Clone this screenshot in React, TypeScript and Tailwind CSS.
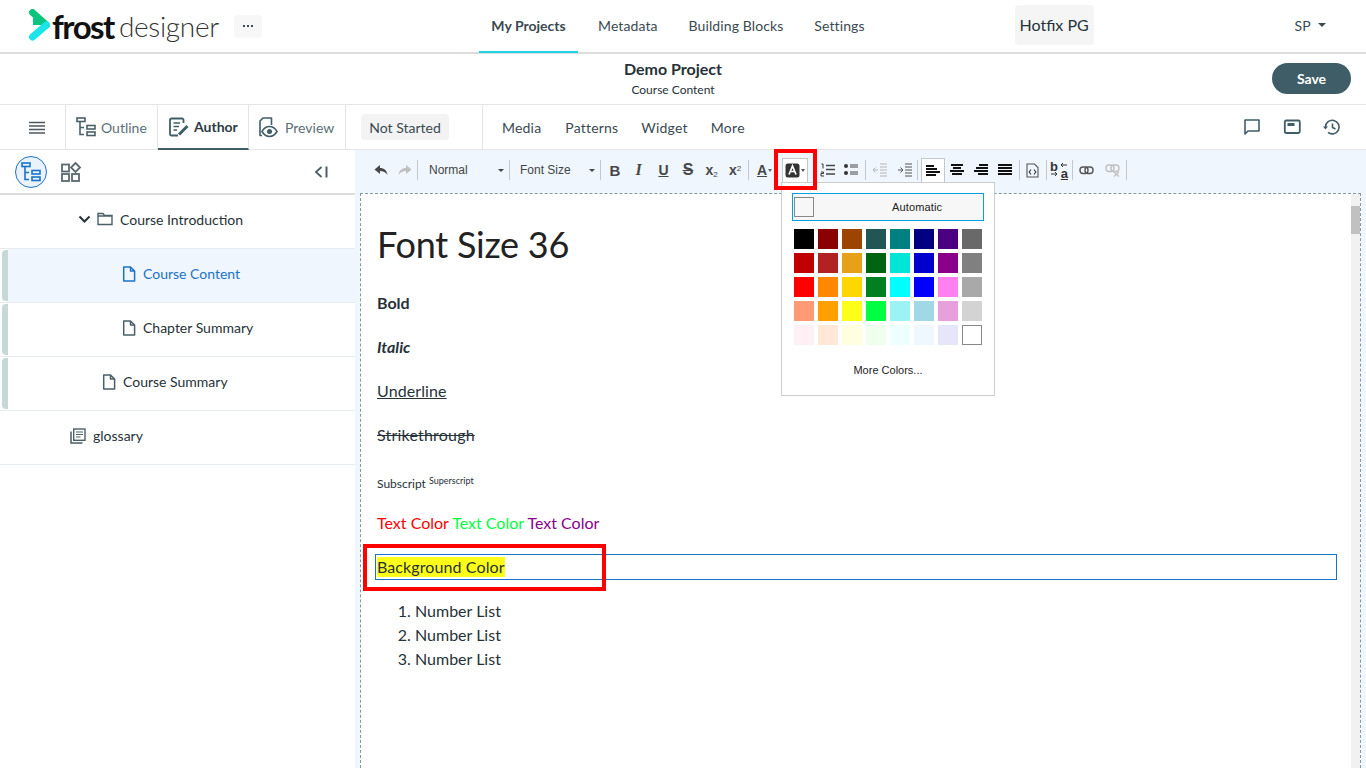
import React from "react";

const lato = { fontFamily: "Lato, sans-serif" };

const Ic = ({ w = 20, h = 20, vb, children, className = "" }: { w?: number; h?: number; vb?: string; children: React.ReactNode; className?: string }) => (
  <svg width={w} height={h} viewBox={vb || `0 0 ${w} ${h}`} fill="none" className={className}>{children}</svg>
);

const TreeIcon = ({ c = "#4a5f68", s = 1.6 }: { c?: string; s?: number }) => (
  <Ic w={20} h={20}>
    <g stroke={c} strokeWidth={s}>
      <rect x="1" y="1" width="8" height="3.5" />
      <path d="M4 4.5V17.5H8M4 10.5H8" />
      <rect x="11" y="8.5" width="8" height="3.5" />
      <rect x="11" y="15" width="8" height="3.5" />
    </g>
  </Ic>
);

const DocIcon = ({ c = "#4a5f68" }: { c?: string }) => (
  <Ic w={14} h={16}>
    <path d="M1.7 1H8.5L12.6 5V14.9H1.7Z M8.5 1V5H12.6" stroke={c} strokeWidth="1.5" strokeLinejoin="round" />
  </Ic>
);

const Sep = ({ cls = "" }: { cls?: string }) => <span className={`w-px h-[20px] bg-[#c4c8cc] shrink-0 ${cls}`} />;

const Tb = ({ w = 24, children, cls = "" }: { w?: number; children: React.ReactNode; cls?: string }) => (
  <span style={{ width: w }} className={`h-[24px] flex items-center justify-center shrink-0 ${cls}`}>{children}</span>
);

const Lines = ({ rows, dim = false }: { rows: [number, number][]; dim?: boolean }) => (
  <Ic w={16} h={14}>
    {rows.map(([x1, x2], i) => (
      <rect key={i} x={x1} y={1 + i * 3} width={x2 - x1} height="2" fill={dim ? "#b5b5b5" : "#111"} />
    ))}
  </Ic>
);

const swatches = [
  ["#000000", "#8b0000", "#9b4500", "#215654", "#008080", "#000080", "#4b0082", "#696969"],
  ["#c00000", "#b22222", "#e6a118", "#006410", "#00e5d5", "#0000cd", "#8b008b", "#808080"],
  ["#ff0000", "#ff8800", "#ffd700", "#008020", "#00ffff", "#0000ff", "#ff80ee", "#a9a9a9"],
  ["#ff9a76", "#ffa000", "#ffff1a", "#00ff40", "#9bf3f3", "#a0d8e6", "#e8a0dc", "#d3d3d3"],
  ["#fff0f5", "#ffe8d6", "#ffffe0", "#eeffee", "#eeffff", "#f0f8ff", "#e6e6fa", "#ffffff"],
];

const Row = ({ indent, icon, label, handle, active }: { indent: number; icon: React.ReactNode; label: string; handle?: boolean; active?: boolean }) => (
  <div className="h-[54px] flex border-b border-[#e9ecef] shrink-0">
    <div className="w-[2px]" />
    <div className={`w-[6px] my-px rounded-l-[4px] ${handle ? "bg-[#c8d8d8]" : ""}`} />
    <div className={`flex-1 flex items-center pb-[4px] ${active ? "bg-[#eff6fe]" : ""}`} style={{ paddingLeft: indent }}>
      {icon}
      <span className={`text-[14px] ${active ? "text-[#1a73c9]" : "text-[#263238]"}`}>{label}</span>
    </div>
  </div>
);

export default function App() {
  return (
    <div className="relative w-[1366px] h-[768px] overflow-hidden bg-white text-[#263238]" style={lato}>
      {/* top nav */}
      <header className="h-[54px] flex items-center border-b-2 border-[#dcdcdc] bg-white">
        <div className="w-[479px] flex items-center pl-[28px] shrink-0">
          <Ic w={23} h={32} className="mb-[3px]">
            <path d="M5 3.5L19 16L5 16Z" fill="#0bc47e" />
            <path d="M4.5 3.5L18.5 16" stroke="#0bc47e" strokeWidth="7" strokeLinecap="round" />
            <path d="M4.5 28L18.5 16" stroke="#1de4e8" strokeWidth="7" strokeLinecap="round" />
          </Ic>
          <span className="ml-[1px] text-[33px] font-bold text-[#111] tracking-[-1.500px] leading-none">frost</span>
          <span className="ml-[5px] text-[28px] font-light text-[#333] leading-none tracking-[-0.300px]">designer</span>
          <span className="ml-[15px] w-[28px] h-[23px] rounded-[4px] bg-[#f7f7f7] flex items-center justify-center gap-[2px]">
            <i className="w-[2px] h-[2px] bg-[#3c4a55]" /><i className="w-[2px] h-[2px] bg-[#3c4a55]" /><i className="w-[2px] h-[2px] bg-[#3c4a55]" />
          </span>
        </div>
        <nav className="flex items-center h-full text-[14px] tracking-[0.100px]">
          <span className="w-[99px] h-full flex items-center justify-center pb-[2px] font-bold text-[#3a4a52] border-b-2 border-[#1fd4e0] -mb-[2px] tracking-normal">My Projects</span>
          <span className="ml-[20px] pb-[2px] text-[#3a4a52]">Metadata</span>
          <span className="ml-[31px] pb-[2px] text-[#3a4a52]">Building Blocks</span>
          <span className="ml-[31px] pb-[2px] text-[#3a4a52]">Settings</span>
        </nav>
        <span className="ml-[150px] mb-[2px] w-[79px] h-[40px] rounded-[4px] bg-[#f5f5f5] flex items-center justify-center text-[16px]">Hotfix PG</span>
        <span className="ml-[201px] pb-[2px] text-[14px] text-[#3a4a52]">SP</span>
        <span className="ml-[7px] mb-[2px] w-0 h-0 border-x-[4px] border-x-transparent border-t-[4px] border-t-[#3a4a52]" />
      </header>

      {/* title bar */}
      <div className="h-[51px] flex items-center border-b border-[#e5e5e5]">
        <div className="w-[1272px] pl-[346px] pb-[3px] flex flex-col items-start">
          <span className="w-[654px] text-center text-[16px] font-bold leading-[20px] text-[#263238]">Demo Project</span>
          <span className="w-[654px] text-center text-[12px] leading-[14px] mt-[4px]">Course Content</span>
        </div>
        <button className="w-[79px] h-[31px] mb-[1px] rounded-full bg-[#3f5d66] text-white text-[14px] font-bold">Save</button>
      </div>

      {/* tab bar */}
      <div className="h-[45px] flex items-stretch border-b border-[#e5e5e5] text-[14px]">
        <div className="w-[66px] flex items-center justify-center border-r border-[#e5e5e5] pl-[10px] pr-[1px] shrink-0">
          <Ic w={16} h={13}><path d="M0 1.5H16M0 5H16M0 8.5H16M0 12H16" stroke="#4a5a60" strokeWidth="1.5" /></Ic>
        </div>
        <div className="w-[92px] flex items-center pl-[10px] gap-[5px] border-r border-[#e5e5e5] text-[#5b6f78] shrink-0">
          <TreeIcon />Outline
        </div>
        <div className="w-[91px] flex items-center pl-[10px] gap-[4px] border-r border-[#e5e5e5] border-b-2 border-b-[#3f5d66] -mb-px font-bold text-[#2c3a42] shrink-0">
          <Ic w={22} h={22}>
            <path d="M10 19.5H3.5a1.5 1.5 0 0 1-1.5-1.5V4a1.5 1.5 0 0 1 1.5-1.5H14a1.5 1.5 0 0 1 1.5 1.5V7" stroke="#3f5d66" strokeWidth="1.8" />
            <path d="M5.5 7H12M5.5 10.5H11M5.5 14H9" stroke="#3f5d66" strokeWidth="1.5" />
            <path d="M11 18.5L19.5 10" stroke="#3f5d66" strokeWidth="3" />
          </Ic>
          Author
        </div>
        <div className="w-[97px] flex items-center pl-[8px] gap-[7px] border-r border-[#e5e5e5] text-[#5b6f78] shrink-0">
          <Ic w={21} h={22}>
            <path d="M5 19.5H3V5L6 2H14.5V9" stroke="#3f5d66" strokeWidth="1.6" strokeLinejoin="round" />
            <path d="M5 15.5C7 12 9.5 10.5 12.5 10.5S18 12 20 15.5C18 19 15.5 20.5 12.500 20.500S7 19 5 15.500Z" stroke="#3f5d66" strokeWidth="1.6" />
            <circle cx="12.5" cy="15.500" r="2.500" fill="#3f5d66" />
          </Ic>
          Preview
        </div>
        <div className="w-[137px] flex items-center pl-[15px] border-r border-[#e5e5e5] shrink-0">
          <span className="h-[26px] w-[88px] rounded-[4px] bg-[#f3f3f3] flex items-center justify-center text-[#3a4a52]">Not Started</span>
        </div>
        <span className="ml-[19px] self-center text-[#3a4a52] tracking-[0.200px]">Media</span>
        <span className="ml-[24px] self-center text-[#3a4a52] tracking-[0.200px]">Patterns</span>
        <span className="ml-[23px] self-center text-[#3a4a52] tracking-[0.200px]">Widget</span>
        <span className="ml-[23px] self-center text-[#3a4a52] tracking-[0.300px]">More</span>
        <div className="ml-auto flex items-center gap-[20px] pr-[24px]">
          <Ic w={20} h={20}>
            <path d="M3 3H17V14H6L3 17Z" stroke="#3f5d66" strokeWidth="1.6" strokeLinejoin="round" />
          </Ic>
          <Ic w={20} h={20}>
            <rect x="2.800" y="3.500" width="15" height="12.500" rx="1.500" stroke="#3f5d66" strokeWidth="1.800" />
            <rect x="5.500" y="6" width="7" height="3" fill="#3f5d66" />
          </Ic>
          <Ic w={20} h={20}>
            <path d="M3.500 10A6.800 6.800 0 1 1 6 15.300" stroke="#3f5d66" strokeWidth="1.600" />
            <path d="M1 9.500H6L3.500 12.500Z" fill="#3f5d66" />
            <path d="M10.500 6.500V10.500L13.500 12" stroke="#3f5d66" strokeWidth="1.600" />
          </Ic>
        </div>
      </div>

      {/* main */}
      <div className="flex h-[618px]">
        {/* left panel */}
        <aside className="w-[355px] shrink-0 flex flex-col bg-white">
          <div className="h-[45px] flex items-center border-b-2 border-[#dcdcdc] pl-[15px] shrink-0">
            <span className="w-[32px] h-[32px] rounded-full border border-[#1a73c9] bg-[#eaf2fb] flex items-center justify-center">
              <TreeIcon c="#1a73c9" />
            </span>
            <span className="ml-[13px]">
              <Ic w={22} h={20}>
                <g stroke="#5a6a70" strokeWidth="1.800">
                  <rect x="2" y="2.500" width="7" height="7" />
                  <rect x="2" y="12" width="7" height="7" />
                  <rect x="12" y="12" width="7" height="7" />
                  <path d="M15.500 1L20 5.500L15.500 10L11 5.500Z" />
                </g>
              </Ic>
            </span>
            <span className="ml-[232px]">
              <Ic w={15} h={14}>
                <path d="M7.500 2L2 7L7.500 12" stroke="#4a5f68" strokeWidth="1.800" />
                <path d="M12.500 1.500V12.500" stroke="#4a5f68" strokeWidth="2" />
              </Ic>
            </span>
          </div>
          <div className="h-[54px] flex items-center border-b border-[#e9ecef] pl-[78px] pb-[5px] shrink-0">
            <Ic w={13} h={9} className="mr-[6px]"><path d="M1.500 1.500L6.500 6.500L11.500 1.500" stroke="#263238" strokeWidth="2" /></Ic>
            <Ic w={16} h={14} className="mr-[7px]"><path d="M1 12.500V1.500H6L7.500 3.500H15V12.500Z M1 4H15" stroke="#4a5f68" strokeWidth="1.400" /></Ic>
            <span className="text-[14px]">Course Introduction</span>
          </div>
          <Row indent={114} active handle icon={<span className="mr-[7px] flex"><DocIcon c="#1a73c9" /></span>} label="Course Content" />
          <Row indent={114} handle icon={<span className="mr-[7px] flex"><DocIcon /></span>} label="Chapter Summary" />
          <Row indent={94} handle icon={<span className="mr-[7px] flex"><DocIcon /></span>} label="Course Summary" />
          <div className="h-[54px] flex items-center border-b border-[#e9ecef] pl-[70px] pb-[4px] shrink-0">
            <Ic w={16} h={16} className="mr-[7px]">
              <path d="M1 3.500V15H12.500" stroke="#4a5f68" strokeWidth="1.500" />
              <rect x="3.700" y="1" width="11.300" height="11.300" stroke="#4a5f68" strokeWidth="1.400" />
              <path d="M6 4H13M6 6.500H13M6 9H10.500" stroke="#4a5f68" strokeWidth="1.200" />
            </Ic>
            <span className="text-[14px]">glossary</span>
          </div>
        </aside>

        {/* right */}
        <main className="flex-1 flex flex-col bg-[#eff6fe]">
          {/* toolbar */}
          <div className="h-[40px] flex items-center pl-[14px] shrink-0 text-[#333]" style={{ fontFamily: '"Liberation Sans", Arial, sans-serif' }}>
            <Tb>
              <Ic w={16} h={12}><path d="M7 1L1.500 5.500L7 10V7C10 7 12.500 8 14.500 11C14 6.500 11 4 7 4Z" fill="#474747" /></Ic>
            </Tb>
            <Tb>
              <Ic w={16} h={12}><path d="M9 1L14.500 5.500L9 10V7C6 7 3.500 8 1.500 11C2 6.500 5 4 9 4Z" fill="#c0c0c0" /></Ic>
            </Tb>
            <Sep />
            <span className="w-[91px] h-[24px] flex items-center pl-[11px] pr-[5px] justify-between text-[12px] text-[#444]">
              Normal<i className="w-0 h-0 border-x-[3.500px] border-x-transparent border-t-[3.500px] border-t-[#444]" />
            </span>
            <Sep />
            <span className="w-[90px] h-[24px] flex items-center pl-[10px] pr-[5px] justify-between text-[12px] text-[#444]">
              Font Size<i className="w-0 h-0 border-x-[3.500px] border-x-transparent border-t-[3.500px] border-t-[#444]" />
            </span>
            <Sep />
            <Tb w={28}><b className="text-[15px] leading-none text-[#474747]">B</b></Tb>
            <Tb w={19}><b className="italic text-[16px] leading-none text-[#474747]" style={{ fontFamily: '"Liberation Serif", serif' }}>I</b></Tb>
            <Tb w={25} cls="ml-[3px]"><b className="underline text-[14px] leading-none text-[#474747]">U</b></Tb>
            <Tb w={24}><b className="line-through text-[16px] leading-none text-[#474747]">S</b></Tb>
            <Tb w={23}><b className="text-[14px] leading-none text-[#474747]">x<sub className="text-[8px] font-normal">2</sub></b></Tb>
            <Tb w={24}><b className="text-[14px] leading-none text-[#474747]">x<sup className="text-[8px] font-normal">2</sup></b></Tb>
            <Sep cls="ml-[1px]" />
            <Tb w={25}>
              <span className="flex items-center gap-[1px] pl-[6px]">
                <b className="underline text-[14px] leading-none text-[#474747]">A</b>
                <i className="w-0 h-0 border-x-[2.500px] border-x-transparent border-t-[3px] border-t-[#666]" />
              </span>
            </Tb>
            <span className="ml-[8px] w-[26px] h-[25px] border border-[#c4c8cc] border-b-white bg-white flex items-center justify-center gap-[1px] shrink-0 mt-[1px]">
              <Ic w={15} h={15}>
                <rect x="0.500" y="0.500" width="14" height="14" rx="2.500" fill="#333" />
                <path d="M4 11.500L7.500 3L11 11.500M5.300 8.500H9.700" stroke="#fff" strokeWidth="1.700" />
              </Ic>
              <i className="w-0 h-0 border-x-[2.500px] border-x-transparent border-t-[3px] border-t-[#555]" />
            </span>
            <Tb w={22} cls="ml-[9px]">
              <Ic w={16} h={14}>
                <path d="M6 2.500H15M6 6.500H15M6 11H15" stroke="#474747" strokeWidth="1.300" />
                <path d="M1.500 1H3V5.500M1 9H3.500V10.500H1V13H4" stroke="#333" strokeWidth="1" />
              </Ic>
            </Tb>
            <Tb w={23}>
              <Ic w={16} h={14}>
                <circle cx="3" cy="3" r="2" fill="#333" /><circle cx="3" cy="10" r="2" fill="#333" />
                <path d="M7 2H15M7 4H15M7 9H15M7 11H15" stroke="#474747" strokeWidth="1" />
              </Ic>
            </Tb>
            <Sep cls="ml-[3px]" />
            <Tb w={28}>
              <Ic w={16} h={14}>
                <path d="M1 7H6M3.500 4.500L1 7L3.500 9.500M8 1H15M8 4H15M8 7H15M8 10H15M8 13H15" stroke="#b5b5b5" strokeWidth="1" />
              </Ic>
            </Tb>
            <Tb w={22}>
              <Ic w={16} h={14}>
                <path d="M1 7H6M3.500 4.500L6 7L3.500 9.500M8 1H15M8 4H15M8 7H15M8 10H15M8 13H15" stroke="#555" strokeWidth="1" />
              </Ic>
            </Tb>
            <Sep cls="ml-[1px]" />
            <span className="ml-[3px] w-[24px] h-[25px] border border-[#c4c8cc] bg-white flex items-center justify-center shrink-0 mt-[1px]">
              <Lines rows={[[1, 9], [1, 12], [1, 15], [1, 11]]} />
            </span>
            <Tb w={24}><Lines rows={[[2, 14], [4, 12], [1, 15], [3, 13]]} /></Tb>
            <Tb w={24}><Lines rows={[[6, 15], [3, 15], [1, 15], [5, 15]]} /></Tb>
            <Tb w={24}><Lines rows={[[1, 15], [1, 15], [1, 15], [1, 15]]} /></Tb>
            <Sep cls="ml-[2px]" />
            <Tb w={24}>
              <Ic w={13} h={15}>
                <path d="M1 1H8.500L12 4.500V14H1Z" stroke="#555" strokeWidth="1.100" />
                <path d="M5 6.500L3.200 9L5 11.500M8 6.500L9.800 9L8 11.500" stroke="#333" strokeWidth="1.100" />
              </Ic>
            </Tb>
            <Sep cls="ml-[2px]" />
            <Tb w={24}>
              <span className="relative flex w-[18px] h-[20px] text-[13px] leading-none font-bold text-[#333]">
                <span className="absolute left-0 top-0">b</span>
                <span className="absolute right-0 bottom-0 underline">a</span>
                <svg width="18" height="20" viewBox="0 0 18 20" fill="none" className="absolute left-0 top-0">
                  <path d="M17 5H11M13 3L11 5L13 7M1 14H7M5 12L7 14L5 16" stroke="#333" strokeWidth="1" />
                </svg>
              </span>
            </Tb>
            <Sep cls="ml-[1px]" />
            <Tb w={26}>
              <Ic w={15} h={9}>
                <rect x="1" y="1" width="8" height="6.500" rx="3" stroke="#555" strokeWidth="1.400" />
                <rect x="6" y="1" width="8" height="6.500" rx="3" stroke="#555" strokeWidth="1.400" />
              </Ic>
            </Tb>
            <Tb w={27}>
              <Ic w={15} h={13}>
                <rect x="1" y="1" width="8" height="6.500" rx="3" stroke="#c0c0c0" strokeWidth="1.400" />
                <rect x="6" y="1" width="8" height="6.500" rx="3" stroke="#c0c0c0" strokeWidth="1.400" />
                <path d="M9 8L14 12.500M14 8L9 12.500" stroke="#c0c0c0" strokeWidth="1.400" />
              </Ic>
            </Tb>
            <Sep />
          </div>

          {/* editing surface */}
          <div className="mt-[3px] ml-[5px] w-[1001px] flex-1 flex border border-dashed border-[#7f9a9a] border-b-0 bg-white overflow-hidden">
            <div className="flex-1 pl-[14px] pr-[14px]" style={{ fontFamily: "Lato, sans-serif" }}>
              <h1 className="ml-[2px] text-[36px] leading-[44px] mt-[28px] text-[#222] tracking-[-0.250px]">Font Size 36</h1>
              <p className="ml-[2px] text-[16px] font-bold leading-[24px] mt-[25px]">Bold</p>
              <p className="ml-[2px] text-[16px] font-bold italic leading-[24px] mt-[20px]">Italic</p>
              <p className="ml-[2px] text-[16px] underline leading-[24px] mt-[20px] tracking-[0.100px]">Underline</p>
              <p className="ml-[2px] text-[16px] line-through leading-[24px] mt-[20px] tracking-[0.200px]">Strikethrough</p>
              <p className="ml-[2px] text-[12px] leading-[24px] mt-[25px]">
                Subscript <sup className="text-[9px]">Superscript</sup>
              </p>
              <p className="ml-[2px] text-[16px] leading-[24px] mt-[15px]">
                <span className="text-[#ff0000]">Text Color</span> <span className="text-[#00ff40]">Text Color</span> <span className="text-[#8b008b]">Text Color</span>
              </p>
              <div className="mt-[19px] h-[26px] border border-[#1a73c9] pl-[1px] flex items-center text-[16px]">
                <span className="bg-[#ffff1a] leading-[20px] tracking-[0.100px]">Background Color</span>
              </div>
              <ol className="mt-[19px] pl-[40px] list-decimal text-[16px] leading-[24px]">
                <li>Number List</li>
                <li>Number List</li>
                <li>Number List</li>
              </ol>
            </div>
            <div className="w-[9px] bg-[#f1f1f1] shrink-0 pt-[12px]">
              <div className="h-[28px] bg-[#c1c1c1]" />
            </div>
          </div>
        </main>
      </div>

      {/* colour menu */}
      <div className="absolute left-[781px] top-[182px] w-[214px] h-[214px] bg-white border border-[#cccccc] px-[10px] pt-[10px]" style={{ fontFamily: '"Liberation Sans", Arial, sans-serif' }}>
        <div className="w-[192px] h-[28px] border border-[#00a0e6] bg-[#f7f7f7] flex items-center pl-[1px]">
          <span className="w-[20px] h-[20px] border border-[#888] shrink-0" />
          <span className="ml-[78px] text-[11px] tracking-[0.150px] text-[#222]">Automatic</span>
        </div>
        <div className="mt-[8px] ml-[2px] grid grid-cols-[repeat(8,20px)] gap-[4px]">
          {swatches.flat().map((c, i) => (
            <span key={i} className={`h-[20px] ${i === 39 ? "border border-[#888]" : ""}`} style={{ backgroundColor: c }} />
          ))}
        </div>
        <div className="mt-[18px] text-center text-[11px] leading-[15px] text-[#222]">More Colors...</div>
      </div>

      {/* red annotations */}
      <div className="absolute left-[774px] top-[149px] w-[43px] h-[41px] border-[4px] border-[#ff0000]" />
      <div className="absolute left-[363px] top-[544px] w-[243px] h-[47px] border-[4px] border-[#ff0000]" />
    </div>
  );
}
